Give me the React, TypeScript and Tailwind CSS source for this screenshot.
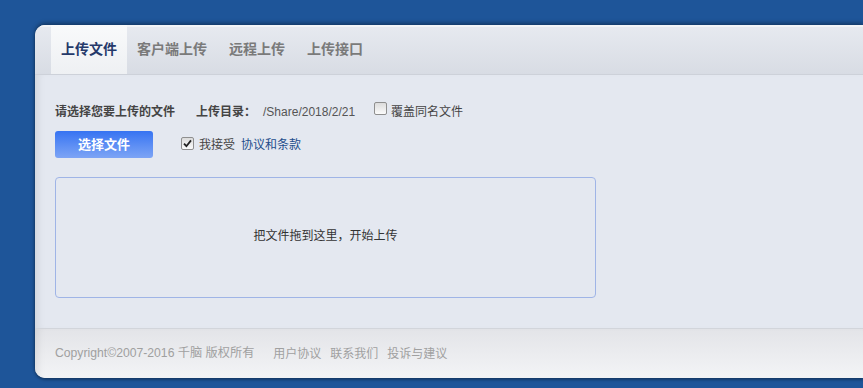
import React from "react";

const cjk = { fontFamily: '"Liberation Sans", "Noto Sans CJK SC", sans-serif' };

function Box({ checked }: { checked?: boolean }) {
  return (
    <span className="inline-flex h-[13px] w-[13px] shrink-0 items-center justify-center rounded-[2px] border border-[#8f8f8f] bg-gradient-to-b from-[#dcdcdc] to-[#fbfbfb]">
      {checked && (
        <svg width="9" height="9" viewBox="0 0 9 9">
          <path d="M1 4.6 L3.4 7.2 L8 1.4" fill="none" stroke="#222" strokeWidth="1.8" />
        </svg>
      )}
    </span>
  );
}

export default function App() {
  const tabs = ["客户端上传", "远程上传", "上传接口"];
  return (
    <div className="h-[388px] w-full overflow-hidden bg-[#1e5599] pl-[35px] pt-[25px]" style={cjk}>
      <div className="flex h-[353px] flex-col overflow-hidden rounded-l-[10px] bg-[#e4e8f0] shadow-[0_-2px_4px_rgba(0,0,0,0.35),0_2px_3px_rgba(0,0,0,0.3)]">
        <div className="relative flex h-[50px] shrink-0 items-end border-b border-[#cdd1d9] bg-gradient-to-b from-[#e7eaf0] to-[#d8dce4] pl-[16px] shadow-[inset_0_2px_0_#f2f4f7]">
          <div className="flex h-[49px] items-center bg-gradient-to-b from-[#f9fafb] to-[#eef0f3] px-[10px] text-[14px] font-bold text-[#25396a]">
            上传文件
          </div>
          <div className="flex h-[49px] items-center gap-[2px]">
            {tabs.map((t) => (
              <div key={t} className="flex h-full items-center px-[10px] text-[14px] font-bold text-[#7a7a7a]">
                {t}
              </div>
            ))}
          </div>
        </div>
        <div className="relative flex-1 pl-[20px] pt-[29px] shadow-[inset_8px_0_8px_-6px_rgba(0,0,0,0.10)]">
          <div className="flex h-[16px] items-center text-[12px] leading-[16px]">
            <span className="font-bold text-[#444]">请选择您要上传的文件</span>
            <span className="ml-[21px] font-bold text-[#444]">上传目录：</span>
            <span className="ml-[7px] text-[#555]">/Share/2018/2/21</span>
            <span className="ml-[19px] -mt-[7px] flex">
              <Box />
            </span>
            <span className="ml-[4px] text-[#444]">覆盖同名文件</span>
          </div>
          <div className="mt-[11px] flex h-[27px] items-center">
            <button className="flex h-[27px] w-[98px] items-center justify-center rounded-[3px] bg-gradient-to-b from-[#3673f2] to-[#7da4f5] text-[13px] font-bold text-white">
              选择文件
            </button>
            <span className="ml-[28px] -mt-[2px] flex">
              <Box checked />
            </span>
            <span className="ml-[5px] text-[12px] text-[#444]">我接受</span>
            <span className="ml-[6px] text-[12px] text-[#1d4d8c]">协议和条款</span>
          </div>
          <div className="mt-[19px] flex h-[121px] w-[541px] items-center justify-center rounded-[4px] border border-[#9fb4e6] pb-[4px] text-[12px] text-[#333]">
            把文件拖到这里，开始上传
          </div>
        </div>
        <div className="flex h-[50px] shrink-0 items-center border-t border-[#d2d5db] bg-gradient-to-b from-[#e3e4e8] to-[#f3f4f6] pl-[20px] text-[12px] text-[#a0a0a0] shadow-[inset_8px_0_8px_-6px_rgba(0,0,0,0.10)]">
          <span className="text-[12.2px]">Copyright©2007-2016 千脑 版权所有</span>
          <span className="ml-[19px]">用户协议</span>
          <span className="ml-[9px]">联系我们</span>
          <span className="ml-[9px]">投诉与建议</span>
        </div>
      </div>
    </div>
  );
}
